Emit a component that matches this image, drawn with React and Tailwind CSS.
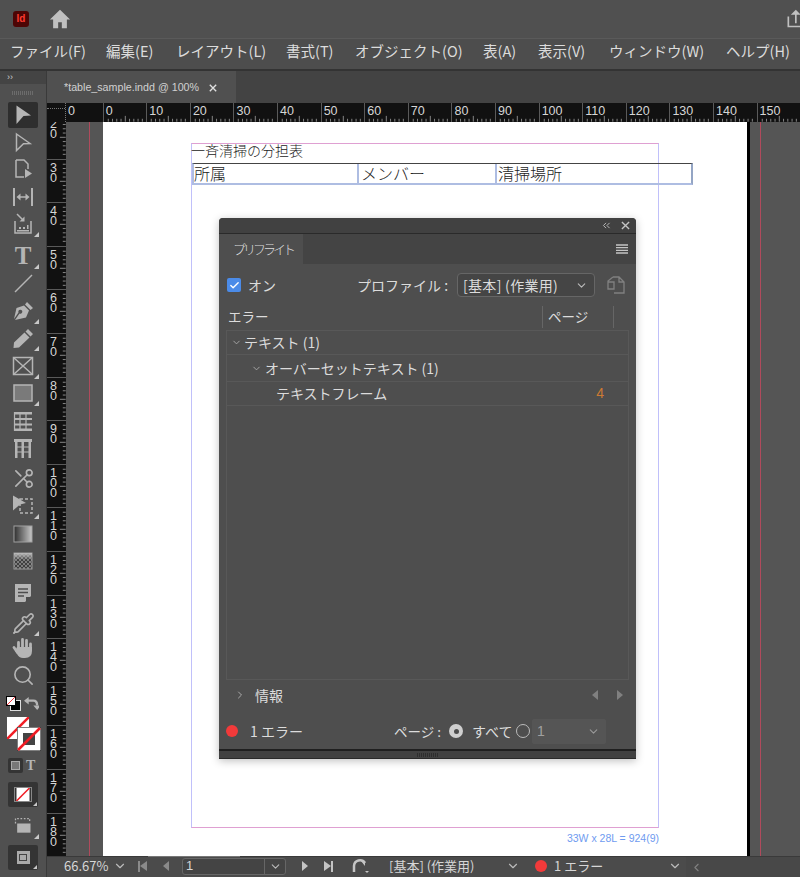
import React from 'react';
import { ChevronDown, ChevronRight, ChevronLeft, Check, Scissors, Search, Pipette } from 'lucide-react';

const JP = 'font-["Noto_Sans_CJK_JP",sans-serif]';
const MENUS = [
  ['ファイル(F)', 'w-[96px]'],
  ['編集(E)', 'w-[70px]'],
  ['レイアウト(L)', 'w-[110px]'],
  ['書式(T)', 'w-[69px]'],
  ['オブジェクト(O)', 'w-[128px]'],
  ['表(A)', 'w-[55px]'],
  ['表示(V)', 'w-[71px]'],
  ['ウィンドウ(W)', 'w-[117px]'],
  ['ヘルプ(H)', 'w-[70px]'],
];
const H_LABELS = ['0', '10', '20', '30', '40', '50', '60', '70', '80', '90', '100', '110', '120', '130', '140', '150'];
const V_LABELS = ['20', '30', '40', '50', '60', '70', '80', '90', '100', '110', '120', '130', '140', '150', '160', '170', '180'];

function Svg({ children, className = 'w-6 h-6' }) {
  return <svg viewBox="0 0 24 24" className={className}>{children}</svg>;
}

const stroke = { fill: 'none', stroke: '#b5b5b5', strokeWidth: 1.5 };
const fill = { fill: '#b5b5b5' };

const ICONS = {
  select: <path {...fill} d="M5.500 2.500 20 12.500l-7.500.5-7 8z" />,
  direct: <path {...stroke} d="M5.500 4 19 13.500l-6.500.3-7 6.700z" />,
  page: <g><path {...stroke} d="M5 3h8l4 4v5M5 3v17h8" /><path {...fill} d="M14 12l7 4.500-7 4.500z" /></g>,
  gap: <g><path {...fill} d="M2 3h2v18H2zM20 3h2v18h-2z" /><path {...stroke} d="M7 12h10" /><path {...fill} d="M5.500 12l4-3.500v7zM18.500 12l-4-3.500v7z" /></g>,
  collect: <g><path {...stroke} d="M4 9v12h16V9" /><path {...stroke} d="M6 2l6 6" /><path {...fill} d="M13.500 9.500H8.500l5-5zM8 15h2v2H8zM12 15h2v2h-2zM16 13h1.500v4H16zM6 18h12v1.500H6z" /></g>,
  line: <path {...stroke} d="M4 21 21 4" />,
  pen: <path {...fill} d="M16 3l6 6-2.500 2-5.500-5.500zM13 6.500l5 5-3 7L4 21l4.500-6.500a2 2 0 1 0-1-1L3 20l2.500-11z" />,
  pencil: <path {...fill} d="M17 3l5 5-2.500 2.500-5-5zM13.500 6.500l5 5L8 21.500 2.500 22 3 16.500z" />,
  frame: <g><rect x="2.500" y="3.500" width="19" height="17" {...stroke} /><path {...stroke} d="M2.500 3.500l19 17M21.500 3.500l-19 17" /></g>,
  rect: <rect x="3" y="4" width="18" height="16" fill="#7a7a7a" stroke="#b5b5b5" strokeWidth="1.500" />,
  rows: <g><path fill="#b5b5b5" d="M3 3h18v2.500H3zM3 9h18v2H3zM3 14.500h18v2H3zM3 19.500h18V22H3z" /><path {...stroke} strokeWidth="1.200" d="M3.500 3v19M9 5v15M15 5v15" /></g>,
  cols: <g><path fill="#b5b5b5" d="M3 3h18v3H3zM4 3h2.500v19H4zM10.500 3h2.500v19h-2.500zM17.500 3H20v19h-2.500z" /><path {...stroke} strokeWidth="1.200" d="M5 11h14M5 16h14" /></g>,
  transform: <g><path {...stroke} strokeDasharray="3 2" d="M9 5h12v14H9z" /><path {...fill} d="M2 1.500 15 9l-6 1.500-7 6z" /></g>,
  gradient: <g><defs><linearGradient id="g1"><stop offset="0" stopColor="#2f2f2f" /><stop offset="1" stopColor="#c8c8c8" /></linearGradient></defs><rect x="3" y="4" width="18" height="16" fill="url(#g1)" stroke="#a0a0a0" /></g>,
  feather: <g><defs><pattern id="c1" width="4" height="4" patternUnits="userSpaceOnUse"><rect width="4" height="4" fill="#7d7d7d" /><rect width="2" height="2" fill="#3f3f3f" /><rect x="2" y="2" width="2" height="2" fill="#3f3f3f" /></pattern><linearGradient id="f1" x2="0" y2="1"><stop offset="0" stopColor="#bbb" /><stop offset="1" stopColor="#bbb" stopOpacity="0" /></linearGradient></defs><rect x="3" y="4" width="18" height="16" fill="url(#c1)" stroke="#999" /><rect x="3" y="4" width="18" height="7" fill="url(#f1)" /></g>,
  note: <g><path {...fill} d="M4 3h16v12l-6 6H4z" /><path stroke="#4d4d4d" strokeWidth="1.500" d="M7 8h10M7 11.500h10M7 15h6" /><path fill="#4d4d4d" d="M15 21v-5h5z" /></g>,
  layout: <g><path {...stroke} strokeDasharray="2 2" d="M3 9V3h17v5" /><rect x="5" y="9" width="16" height="11" {...fill} /></g>,
  hand: <g><path fill="none" stroke="#b5b5b5" strokeWidth="2.800" strokeLinecap="round" d="M7.500 12V6.500M11.500 11V3.500M15.500 11V4.500M19.500 12.500V8M3 11.500l3.500 5" /><path {...fill} d="M6 11h15v4q0 7-7 7h-2q-4 0-6-4l-2-3z" /></g>,
};

function Corner() {
  return <span className="absolute right-[7px] bottom-[1px] w-0 h-0 border-l-[5px] border-l-transparent border-b-[5px] border-b-[#c8c8c8]" />;
}

function Tool({ icon, corner, className = '' }) {
  return (
    <div className={`relative w-full h-[27.500px] shrink-0 flex items-center justify-center ${className}`}>
      {icon}
      {corner && <Corner />}
    </div>
  );
}

function NoneBox({ className = '' }) {
  return (
    <svg viewBox="0 0 22 22" className={className}>
      <rect width="22" height="22" fill="#fff" />
      <path d="M0 22 22 0" stroke="#f01c24" strokeWidth="2.500" />
    </svg>
  );
}

function Toolbar() {
  return (
    <aside className="w-[47px] shrink-0 bg-[#505050] flex flex-col border-r border-[#3a3a3a]">
      <div className="h-[13px] bg-[#444] flex items-center px-[7px] text-[9px] leading-none text-[#ccc] font-['Liberation_Sans',sans-serif]">››</div>
      <div className="h-[18px] flex items-center justify-center">
        <div className="w-[22px] h-[4px] bg-[repeating-linear-gradient(90deg,#6c6c6c_0,#6c6c6c_1px,transparent_1px,transparent_2px)]" />
      </div>
      <div className="mx-[8px] h-[26px] -mb-px rounded-[2px] bg-[#2e2e2e] flex items-center justify-center shrink-0">
        <Svg>{ICONS.select}</Svg>
      </div>
      <Tool icon={<Svg>{ICONS.direct}</Svg>} className="mt-px" />
      <Tool icon={<Svg>{ICONS.page}</Svg>} />
      <Tool icon={<Svg>{ICONS.gap}</Svg>} />
      <Tool icon={<Svg>{ICONS.collect}</Svg>} corner />
      <Tool className="mt-[4px]" corner icon={<span className="font-['Liberation_Serif',serif] font-bold text-[25px] leading-none text-[#b5b5b5]">T</span>} />
      <Tool icon={<Svg>{ICONS.line}</Svg>} />
      <Tool icon={<Svg>{ICONS.pen}</Svg>} corner />
      <Tool icon={<Svg>{ICONS.pencil}</Svg>} corner />
      <Tool icon={<Svg>{ICONS.frame}</Svg>} corner />
      <Tool icon={<Svg>{ICONS.rect}</Svg>} corner />
      <Tool icon={<Svg>{ICONS.rows}</Svg>} />
      <Tool icon={<Svg>{ICONS.cols}</Svg>} />
      <Tool className="mt-[3px]" icon={<Scissors className="w-[23px] h-[23px] text-[#b5b5b5] rotate-180" strokeWidth={1.700} />} />
      <Tool icon={<Svg>{ICONS.transform}</Svg>} corner />
      <Tool icon={<Svg>{ICONS.gradient}</Svg>} />
      <Tool icon={<Svg>{ICONS.feather}</Svg>} />
      <Tool className="mt-[4px]" icon={<Svg>{ICONS.note}</Svg>} />
      <Tool className="mt-[3px]" corner icon={<Pipette className="w-[23px] h-[23px] text-[#b5b5b5]" strokeWidth={1.700} />} />
      <Tool className="-mt-[2.500px]" icon={<Svg>{ICONS.hand}</Svg>} />
      <Tool icon={<Search className="w-[23px] h-[23px] text-[#b5b5b5]" strokeWidth={1.700} />} />

      <div className="h-[22px] mt-[3px] flex items-center justify-between pl-[6px] pr-[7px] shrink-0">
        <div className="relative w-[15px] h-[15px]">
          <div className="absolute right-0 bottom-0 w-[11px] h-[11px] bg-black border border-[#ddd]" />
          <NoneBox className="absolute left-0 top-0 w-[10px] h-[10px] border border-black" />
        </div>
        <svg viewBox="0 0 16 16" className="w-[15px] h-[15px]"><path d="M2 5h8q4 0 4 5" fill="none" stroke="#b5b5b5" strokeWidth="2.500" /><path fill="#b5b5b5" d="M5 1v8L0 5zM10 10h8l-4 5z" /></svg>
      </div>
      <div className="relative h-[34px] mx-[7px] mt-[2px] shrink-0">
        <NoneBox className="absolute left-0 top-0 w-[22px] h-[22px]" />
        <div className="absolute left-[10px] top-[10px] w-[24px] h-[24px]">
          <svg viewBox="0 0 24 24" className="w-full h-full">
            <rect width="24" height="24" fill="#fff" stroke="#000" strokeWidth="1" />
            <rect x="6" y="6" width="12" height="12" fill="#444" />
            <path d="M1 23 23 1" stroke="#f01c24" strokeWidth="2.500" />
          </svg>
        </div>
      </div>
      <div className="h-[18px] mt-[6px] px-[8px] flex items-center shrink-0">
        <div className="w-[15px] h-[15px] rounded-[2px] bg-[#343434] flex items-center justify-center">
          <div className="w-[9px] h-[9px] bg-[#777] border border-[#aaa]" />
        </div>
        <span className="ml-[3px] font-['Liberation_Serif',serif] font-bold text-[14px] leading-none text-[#b5b5b5]">T</span>
      </div>
      <div className="mx-[8px] mt-[7px] h-[25px] rounded-[2px] bg-[#343434] flex items-center justify-center relative shrink-0">
        <NoneBox className="w-[18px] h-[15px] border border-[#888]" />
        <span className="absolute right-[1px] bottom-[1px] w-0 h-0 border-l-[4px] border-l-transparent border-b-[4px] border-b-[#c8c8c8]" />
      </div>
      <Tool className="mt-[6px]" icon={<Svg className="w-[20px] h-[20px]">{ICONS.layout}</Svg>} corner />
      <div className="mx-[8px] mt-[5px] h-[25px] rounded-[2px] bg-[#343434] flex items-center justify-center relative shrink-0">
        <div className="w-[13px] h-[13px] bg-[#aaa] flex items-center justify-center">
          <div className="w-[8px] h-[7px] border border-[#444]" />
        </div>
        <span className="absolute right-[1px] bottom-[1px] w-0 h-0 border-l-[4px] border-l-transparent border-b-[4px] border-b-[#c8c8c8]" />
      </div>
    </aside>
  );
}

function HTicks() {
  return (
    <svg viewBox="0 0 44 19" className="absolute inset-0 w-full h-full">
      <path d="M4.400 19v-3M8.800 19v-3M13.200 19v-3M17.600 19v-3M22 19v-6M26.400 19v-3M30.800 19v-3M35.200 19v-3M39.600 19v-3" stroke="#8a8a8a" strokeWidth="1" />
    </svg>
  );
}

function VTicks() {
  return (
    <svg viewBox="0 0 19 44" className="absolute inset-0 w-full h-full">
      <path d="M19 4.400h-3M19 8.800h-3M19 13.200h-3M19 17.600h-3M19 22h-6M19 26.400h-3M19 30.800h-3M19 35.200h-3M19 39.600h-3" stroke="#8a8a8a" strokeWidth="1" />
    </svg>
  );
}

function HRuler() {
  return (
    <div className="h-[19px] shrink-0 flex bg-[#111] overflow-hidden font-['Liberation_Sans',sans-serif] text-[12.500px] leading-none text-[#d6d6d6]">
      <div className="w-[19px] shrink-0 bg-[#111] border-r border-dotted border-[#777] relative">
        <div className="absolute left-0 right-0 top-[5px] border-t border-dotted border-[#777]" />
      </div>
      <div className="relative w-[36.700px] shrink-0 pl-[2px] pt-[2px]">0</div>
      {H_LABELS.map((n) => (
        <div key={n} className="relative w-[43.600px] shrink-0 border-l border-[#5a5a5a] pl-[2px] pt-[2px]">
          <HTicks />
          {n}
        </div>
      ))}
    </div>
  );
}

function VRuler() {
  return (
    <div className="w-[19px] shrink-0 bg-[#111] overflow-hidden font-['Liberation_Sans',sans-serif] text-[12.500px] leading-[10px] text-[#d6d6d6]">
      <div className="-mt-[7px]">
        {V_LABELS.map((n) => (
          <div key={n} className="relative h-[43.600px] border-t border-[#5a5a5a] pt-[3px] pl-[3px]">
            <VTicks />
            <div className="w-[8px] break-all">{n}</div>
          </div>
        ))}
      </div>
    </div>
  );
}

function PageContent() {
  return (
    <div className={`relative flex-1 bg-white ${JP}`}>
      <div className="absolute left-[88px] top-[21px] w-[468px] h-[685px] border border-x-[#c0c0fa] border-y-[#dfa0d2]" />
      <div className="absolute left-[88px] top-[19px] text-[14px] leading-[18px] font-light text-[#222]">一斉清掃の分担表</div>
      <div className="absolute left-[89px] top-[41px] w-[501px] h-[22px] flex border-t border-t-[#444] border-b-[2px] border-b-[#aebde2] border-l-[2px] border-l-[#aebde2] border-r-[2px] border-r-[#94a5c4] text-[16px] font-light leading-[18px] text-[#222]">
        <div className="w-[165px] border-r-[2px] border-[#aebde2]">所属</div>
        <div className="w-[138px] pl-[2px] border-r-[2px] border-[#aebde2]">メンバー</div>
        <div className="flex-1 pl-[1px]">清掃場所</div>
      </div>
      <div className="absolute right-[88px] bottom-[13px] font-['Liberation_Sans',sans-serif] text-[10.500px] leading-none text-[#6f9bf0]">33W x 28L = 924(9)</div>
      <Panel />
    </div>
  );
}

function Radio({ on }) {
  return (
    <span className={`w-[14px] h-[14px] rounded-full flex items-center justify-center shrink-0 ${on ? 'bg-[#cfcfcf]' : 'border border-[#bbb]'}`}>
      {on && <span className="w-[5px] h-[5px] rounded-full bg-[#4d4d4d]" />}
    </span>
  );
}

function Panel() {
  return (
    <div className={`absolute left-[116px] top-[96px] w-[417px] h-[541px] flex flex-col rounded-t-[4px] bg-[#4e4e4e] shadow-[0_2px_8px_rgba(0,0,0,0.25)] text-[#dcdcdc] text-[14px] ${JP}`}>
      <div className="h-[15px] shrink-0 rounded-t-[4px] bg-[#414141] border-b border-[#2a2a2a] flex items-center justify-end pr-[6px] gap-[10px] box-content">
        <svg viewBox="0 0 10 8" className="w-[9px] h-[7px]"><path d="M4.500 1 1.500 4l3 3M8.500 1l-3 3 3 3" fill="none" stroke="#bbb" strokeWidth="1.100" /></svg>
        <svg viewBox="0 0 10 10" className="w-[9px] h-[9px]"><path d="M1 1l8 8M9 1l-8 8" stroke="#c4c4c4" strokeWidth="1.500" /></svg>
      </div>
      <div className="h-[30px] shrink-0 bg-[#444] flex items-stretch">
        <div className="w-[84px] bg-[#4e4e4e] flex items-center pl-[14px] text-[13px] tracking-[-3px] font-light whitespace-nowrap">プリフライト</div>
        <div className="flex-1 flex items-center justify-end pr-[8px]">
          <svg viewBox="0 0 12 10" className="w-[12px] h-[10px]"><path d="M0 1h12M0 3.700h12M0 6.300h12M0 9h12" stroke="#c4c4c4" strokeWidth="1.300" /></svg>
        </div>
      </div>
      <div className="h-[41px] shrink-0 flex items-center pl-[8px] pt-[1px]">
        <span className="w-[14px] h-[14px] rounded-[2px] bg-[#4b8be8] flex items-center justify-center">
          <Check className="w-[11px] h-[11px] text-white" strokeWidth={3} />
        </span>
        <span className="ml-[7px]">オン</span>
        <span className="ml-[81px] w-[100px] whitespace-nowrap">プロファイル :</span>
        <div className="w-[138px] h-[24px] rounded-[4px] border border-[#666] bg-[#454545] flex items-center pl-[5px] pr-[6px] justify-between">
          <span className="tracking-[0.3px]">[基本] (作業用)</span>
          <ChevronDown className="w-[13px] h-[13px] text-[#bbb]" />
        </div>
        <svg viewBox="0 0 20 20" className="ml-[11px] w-[20px] h-[20px]"><path d="M7 2h6l5 5v11H8M13 2v5h5M7 2 2 6v8h6V7H2" fill="none" stroke="#808080" strokeWidth="1.300" /></svg>
      </div>
      <div className="h-[23px] shrink-0 flex items-center pl-[9px] text-[13.500px]">
        <span className="w-[314px]">エラー</span>
        <span className="h-[22px] border-l border-[#666] pl-[5px] w-[71px] flex items-center">ページ</span>
        <span className="h-[22px] border-l border-[#666]" />
      </div>
      <div className="mx-[7px] mt-[2px] h-[350px] shrink-0 border border-[#585858] flex flex-col">
        <div className="h-[24px] border-b border-[#585858] flex items-center pl-[4px]">
          <ChevronDown className="w-[11px] h-[11px] text-[#aaa]" />
          <span className="ml-[2px]">テキスト (1)</span>
        </div>
        <div className="h-[27px] border-b border-[#585858] flex items-center pl-[24px]">
          <ChevronDown className="w-[11px] h-[11px] text-[#aaa]" />
          <span className="ml-[3px]">オーバーセットテキスト (1)</span>
        </div>
        <div className="h-[24px] border-b border-[#585858] flex items-center pl-[49px] pr-[24px] justify-between">
          <span>テキストフレーム</span>
          <span className="font-['Liberation_Sans',sans-serif] text-[#cc7a33]">4</span>
        </div>
      </div>
      <div className="h-[30px] shrink-0 flex items-center pl-[15px] pr-[13px]">
        <ChevronRight className="w-[12px] h-[12px] text-[#aaa]" />
        <span className="ml-[9px] flex-1">情報</span>
        <span className="w-0 h-0 border-y-[5px] border-y-transparent border-r-[6px] border-r-[#808080]" />
        <span className="ml-[19px] w-0 h-0 border-y-[5px] border-y-transparent border-l-[6px] border-l-[#808080]" />
      </div>
      <div className="h-[39px] shrink-0 flex items-center pl-[7px] pt-[3px]">
        <span className="w-[12px] h-[12px] rounded-full bg-[#f23a3a]" />
        <span className="ml-[12px] w-[144px] whitespace-nowrap">1 エラー</span>
        <span className="w-[55px] whitespace-nowrap text-[13.500px]">ページ :</span>
        <Radio on />
        <span className="ml-[9px] w-[44px] whitespace-nowrap">すべて</span>
        <Radio />
        <div className="ml-[2px] w-[74px] h-[25px] rounded-[2px] bg-[#555] flex items-center justify-between pl-[5px] pr-[6px] text-[#a0a0a0]">
          <span className="font-['Liberation_Sans',sans-serif]">1</span>
          <ChevronDown className="w-[13px] h-[13px] text-[#999]" />
        </div>
      </div>
      <div className="flex-1 bg-[#414141] border-t-2 border-[#1f1f1f] border-b border-b-[#2a2a2a] flex items-center justify-center">
        <div className="w-[22px] h-[4px] bg-[repeating-linear-gradient(90deg,#2e2e2e_0,#2e2e2e_1px,transparent_1px,transparent_2px)]" />
      </div>
    </div>
  );
}

function StatusBar() {
  return (
    <div className={`h-[21px] shrink-0 relative flex items-center pb-[2px] bg-[#4b4b4b] border-t border-[#3a3a3a] text-[13px] text-[#d6d6d6] ${JP}`}>
      <div className="absolute left-[101px] top-[-1px] w-[92px] h-px bg-[#777]" />
      <span className="ml-[17px] w-[48px]">66.67%</span>
      <ChevronDown className="ml-[1px] w-[14px] h-[14px] text-[#bbb]" />
      <span className="ml-[11px] w-[10px] h-[11px] flex items-center">
        <span className="w-[2px] h-[11px] bg-[#8a8a8a]" />
        <span className="w-0 h-0 border-y-[5px] border-y-transparent border-r-[7px] border-r-[#8a8a8a]" />
      </span>
      <span className="ml-[15px] w-0 h-0 border-y-[5px] border-y-transparent border-r-[6px] border-r-[#8a8a8a]" />
      <div className="ml-[13px] w-[104px] h-[17px] rounded-[3px] border border-[#666] bg-[#444] flex items-center">
        <span className="pl-[3px] flex-1 font-['Liberation_Sans',sans-serif]">1</span>
        <span className="w-[21px] h-full border-l border-[#666] flex items-center justify-center">
          <ChevronDown className="w-[13px] h-[13px] text-[#bbb]" />
        </span>
      </div>
      <span className="ml-[16px] w-0 h-0 border-y-[5px] border-y-transparent border-l-[6px] border-l-[#c4c4c4]" />
      <span className="ml-[16px] w-[10px] h-[11px] flex items-center">
        <span className="w-0 h-0 border-y-[5px] border-y-transparent border-l-[7px] border-l-[#c4c4c4]" />
        <span className="w-[2px] h-[11px] bg-[#c4c4c4]" />
      </span>
      <svg viewBox="0 0 18 16" className="ml-[18px] w-[18px] h-[16px]"><path d="M2 14V8a6 6 0 0 1 11 -3" fill="none" stroke="#c4c4c4" strokeWidth="2.500" /><path d="M9 3h4v5z" fill="#c4c4c4" /><path d="M13 13h4l-2 2z" fill="#c4c4c4" /></svg>
      <span className="ml-[19px] w-[100px] whitespace-nowrap">[基本] (作業用)</span>
      <ChevronDown className="ml-[17px] w-[14px] h-[14px] text-[#bbb]" />
      <span className="ml-[15px] w-[12px] h-[12px] rounded-full bg-[#f23a3a]" />
      <span className="ml-[7px] w-[106px] whitespace-nowrap">1 エラー</span>
      <ChevronDown className="ml-[8px] w-[14px] h-[14px] text-[#bbb]" />
      <div className="ml-[4px] flex-1 -mb-[2px] self-stretch bg-[#484848] flex items-center pl-[4px]">
        <ChevronLeft className="w-[13px] h-[13px] text-[#808080]" />
      </div>
    </div>
  );
}

export default function App() {
  return (
    <div className="w-[800px] h-[877px] overflow-hidden flex flex-col bg-[#4d4d4d]">
      <header className="h-[38px] shrink-0 bg-[#505050] border-b border-[#5a5a5a] flex items-center pl-[13px] box-content">
        <div className="w-[16px] h-[16px] rounded-[3px] bg-[#4d0505] flex items-center justify-center font-['Liberation_Sans',sans-serif] font-bold text-[10px] leading-none text-[#ff3a30]">Id</div>
        <svg viewBox="0 0 24 24" className="ml-[20px] w-[22px] h-[22px]"><path fill="#c0c0c0" d="M12 2 1 12.500h3.500V22h5.500v-6.500h4V22h5.500v-9.500H23z" /></svg>
        <svg viewBox="0 0 24 24" className="ml-auto -mr-[5px] w-[20px] h-[24px]"><path d="M4 9v12h18" fill="none" stroke="#c0c0c0" strokeWidth="2" /><path d="M13 17V5" stroke="#c0c0c0" strokeWidth="2" /><path d="M13 1l6 6H7z" fill="#c0c0c0" /></svg>
      </header>
      <nav className={`h-[23px] pb-[7px] shrink-0 bg-[#4d4d4d] border-b-2 border-[#333] flex items-center pl-[10px] text-[14.500px] text-[#dcdcdc] box-content ${JP}`}>
        {MENUS.map(([label, w]) => (
          <span key={label} className={`${w} shrink-0 whitespace-nowrap`}>{label}</span>
        ))}
      </nav>
      <div className="flex-1 min-h-0 flex">
        <Toolbar />
        <div className="flex-1 min-w-0 flex flex-col">
          <div className="h-[32px] shrink-0 bg-[#434343] flex">
            <div className="w-[189px] bg-[#505050] flex items-center pl-[17px] pt-px text-[#d0d0d0] font-['Liberation_Sans',sans-serif] text-[10.700px]">
              <span className="w-[134px] whitespace-nowrap">*table_sample.indd @ 100%</span>
              <svg viewBox="0 0 10 10" className="ml-[11px] w-[8px] h-[8px]"><path d="M1 1l8 8M9 1l-8 8" stroke="#e0e0e0" strokeWidth="1.700" /></svg>
            </div>
          </div>
          <HRuler />
          <div className="flex-1 min-h-0 flex">
            <VRuler />
            <div className="flex-1 min-w-0 flex bg-[#555]">
              <div className="w-[37px] shrink-0"><div className="w-[24px] h-full border-r border-[#b04a5c]" /></div>
              <div className="w-[644px] shrink-0 flex"><PageContent /></div>
              <div className="w-[3px] shrink-0 bg-black" />
              <div className="flex-1"><div className="ml-[10px] w-px h-full bg-[#b04a5c]" /></div>
            </div>
          </div>
          <StatusBar />
        </div>
      </div>
    </div>
  );
}
